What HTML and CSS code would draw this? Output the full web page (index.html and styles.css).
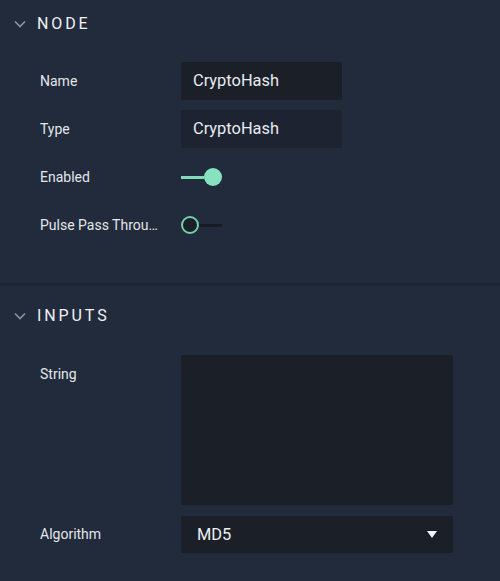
FILE: index.html
```html
<!DOCTYPE html>
<html>
<head>
<meta charset="utf-8">
<link rel="stylesheet" href="styles.css">
</head>
<body>
<div class="panel">
  <section class="section first">
    <div class="header">
      <svg class="chev" width="12" height="8" viewBox="0 0 12 8"><path d="M1 1.5 L6 6.5 L11 1.5" fill="none" stroke="#8b94a3" stroke-width="1.6"/></svg>
      <span class="title">NODE</span>
    </div>
    <div class="rows">
      <div class="row">
        <div class="label">Name</div>
        <div class="field input">CryptoHash</div>
      </div>
      <div class="row">
        <div class="label">Type</div>
        <div class="field input readonly">CryptoHash</div>
      </div>
      <div class="row">
        <div class="label">Enabled</div>
        <div class="toggle on"><span class="track"></span><span class="knob"></span></div>
      </div>
      <div class="row">
        <div class="label">Pulse Pass Through</div>
        <div class="toggle off"><span class="knob"></span><span class="track"></span></div>
      </div>
    </div>
  </section>
  <div class="divider"></div>
  <section class="section second">
    <div class="header">
      <svg class="chev" width="12" height="8" viewBox="0 0 12 8"><path d="M1 1.5 L6 6.5 L11 1.5" fill="none" stroke="#8b94a3" stroke-width="1.6"/></svg>
      <span class="title">INPUTS</span>
    </div>
    <div class="rows">
      <div class="row tall">
        <div class="label">String</div>
        <div class="field textarea"></div>
      </div>
      <div class="row">
        <div class="label">Algorithm</div>
        <div class="field select"><span>MD5</span><svg width="10" height="7" viewBox="0 0 10 7"><path d="M0 0 H10 L5 7 Z" fill="#f2f4f7"/></svg></div>
      </div>
    </div>
  </section>
</div>
</body>
</html>
```
FILE: styles.css
```css
html, body {
  margin: 0;
  padding: 0;
  background: #222b3b;
}
body {
  width: 500px;
  height: 581px;
  overflow: hidden;
  font-family: Roboto, "Noto Sans", sans-serif;
  color: #e6e9ee;
}
.panel {
  display: flex;
  flex-direction: column;
}
.header {
  height: 46px;
  display: flex;
  align-items: center;
  padding-left: 14px;
}
.chev {
  display: block;
  margin-right: 11px;
  margin-top: 1px;
}
.title {
  font-size: 16px;
  letter-spacing: 2.9px;
  color: #eef1f5;
  font-weight: 400;
}
.section.first .rows {
  padding-top: 16px;
  padding-bottom: 39px;
}
.section.second .header {
  margin-top: 6px;
}
.section.second .rows {
  padding-top: 17px;
}
.rows {
  display: flex;
  flex-direction: column;
  gap: 10px;
}
.row {
  display: flex;
  align-items: center;
  height: 38px;
}
.row.tall {
  height: 150px;
  align-items: flex-start;
}
.row.tall .label {
  height: 38px;
  line-height: 38px;
}
.label {
  width: 121px;
  padding-left: 40px;
  padding-right: 20px;
  font-size: 14px;
  color: #e3e6eb;
  white-space: nowrap;
  overflow: hidden;
  text-overflow: ellipsis;
}
.field {
  box-sizing: border-box;
  background: #1a1f28;
  border-radius: 2px;
}
.input {
  width: 161px;
  height: 38px;
  padding-left: 12px;
  font-size: 16.4px;
  line-height: 38px;
  color: #e8ebf0;
}
.input.readonly {
  background: #1d2330;
}
.textarea {
  width: 272px;
  height: 150px;
}
.select {
  width: 272px;
  height: 37px;
  display: flex;
  align-items: center;
  justify-content: space-between;
  padding: 0 16px 0 16px;
  font-size: 16.4px;
  color: #eceff3;
}
.select svg {
  display: block;
}
.toggle {
  display: flex;
  align-items: center;
  width: 41px;
  height: 18px;
}
.toggle .track {
  flex: 1;
  height: 3px;
}
.toggle .knob {
  box-sizing: border-box;
  width: 18px;
  height: 18px;
  border-radius: 50%;
}
.toggle.on .track {
  background: #7fdcb7;
}
.toggle.on .knob {
  background: #86e2bf;
}
.toggle.off .track {
  background: #161b24;
}
.toggle.off .knob {
  background: #1a1f28;
  border: 2.5px solid #71cfa9;
}
.divider {
  height: 3px;
  background: #1d2635;
}
```
